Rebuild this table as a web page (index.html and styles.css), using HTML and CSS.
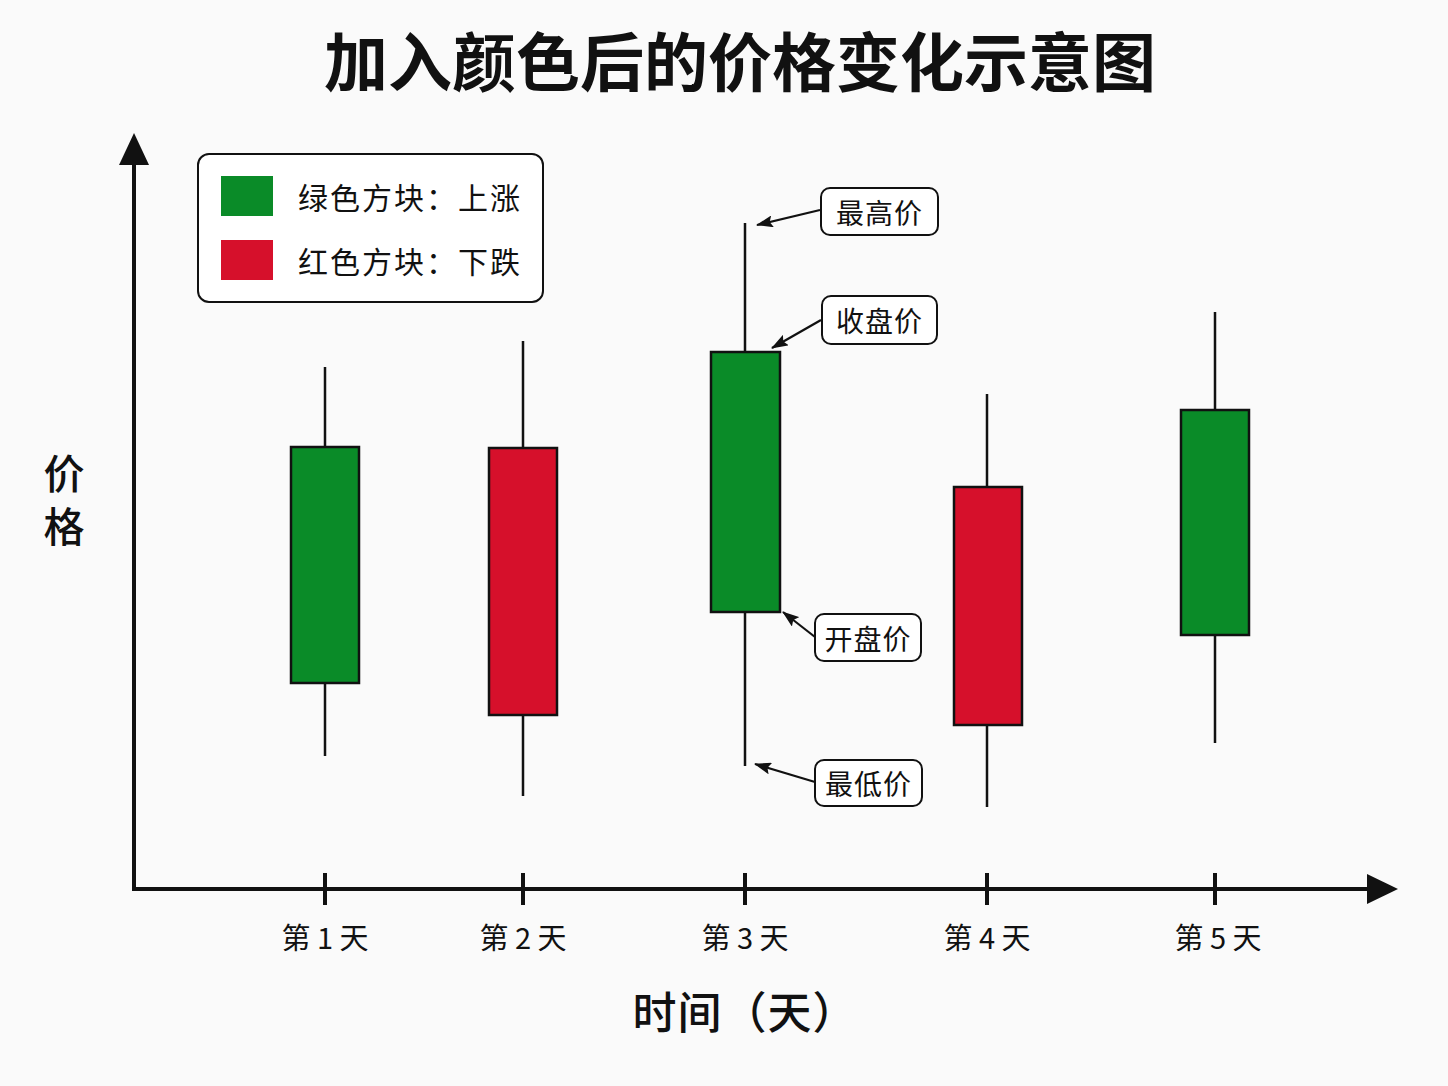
FILE: index.html
```html
<!DOCTYPE html>
<html lang="zh-CN">
<head>
<meta charset="utf-8">
<title>加入颜色后的价格变化示意图</title>
<link rel="stylesheet" href="styles.css">
</head>
<body>
<main class="page">
  <h1 class="title">加入颜色后的价格变化示意图</h1>
  <section class="chart">
    <svg class="plot" width="1448" height="860" viewBox="0 120 1448 860" xmlns="http://www.w3.org/2000/svg">
      <defs>
        <marker id="ah" viewBox="0 0 17 12" refX="16" refY="6" markerWidth="17" markerHeight="12" markerUnits="userSpaceOnUse" orient="auto">
          <path d="M0 0 L17 6 L0 12 L3 6 Z" fill="#111"/>
        </marker>
      </defs>
      <!-- axes -->
      <line x1="134" y1="160" x2="134" y2="891" stroke="#111" stroke-width="4"/>
      <polygon points="134,133 119,165 149,165" fill="#111"/>
      <line x1="132" y1="889" x2="1372" y2="889" stroke="#111" stroke-width="4"/>
      <polygon points="1398,889 1367,874 1367,904" fill="#111"/>
      <g stroke="#111" stroke-width="4">
        <line x1="325" y1="873" x2="325" y2="905"/>
        <line x1="523" y1="873" x2="523" y2="905"/>
        <line x1="745" y1="873" x2="745" y2="905"/>
        <line x1="987" y1="873" x2="987" y2="905"/>
        <line x1="1215" y1="873" x2="1215" y2="905"/>
      </g>
      <!-- wicks -->
      <g stroke="#111" stroke-width="2.5">
        <line x1="325" y1="367" x2="325" y2="756"/>
        <line x1="523" y1="341" x2="523" y2="796"/>
        <line x1="745" y1="223" x2="745" y2="766"/>
        <line x1="987" y1="394" x2="987" y2="807"/>
        <line x1="1215" y1="312" x2="1215" y2="743"/>
      </g>
      <!-- bodies -->
      <g stroke="#111" stroke-width="2.5">
        <rect x="291" y="447" width="68" height="236" fill="#0a8b28"/>
        <rect x="489" y="448" width="68" height="267" fill="#d6102b"/>
        <rect x="711" y="352" width="69" height="260" fill="#0a8b28"/>
        <rect x="954" y="487" width="68" height="238" fill="#d6102b"/>
        <rect x="1181" y="410" width="68" height="225" fill="#0a8b28"/>
      </g>
      <!-- annotation arrows -->
      <g stroke="#111" stroke-width="2.2" marker-end="url(#ah)">
        <line x1="820" y1="210" x2="757" y2="225"/>
        <line x1="821" y1="320" x2="772" y2="348"/>
        <line x1="815" y1="637" x2="783" y2="612"/>
        <line x1="815" y1="782" x2="755" y2="764"/>
      </g>
    </svg>

    <div class="legend">
      <div class="legend-row"><span class="swatch up"></span><span class="legend-text">绿色方块：上涨</span></div>
      <div class="legend-row"><span class="swatch down"></span><span class="legend-text">红色方块：下跌</span></div>
    </div>

    <div class="y-label">价格</div>

    <div class="note note-high">最高价</div>
    <div class="note note-close">收盘价</div>
    <div class="note note-open">开盘价</div>
    <div class="note note-low">最低价</div>

    <div class="tick-label t1">第 1 天</div>
    <div class="tick-label t2">第 2 天</div>
    <div class="tick-label t3">第 3 天</div>
    <div class="tick-label t4">第 4 天</div>
    <div class="tick-label t5">第 5 天</div>
  </section>
  <div class="x-title">时间（天）</div>
</main>
</body>
</html>
```
FILE: styles.css
```css
* { box-sizing: border-box; }
html, body {
  margin: 0;
  padding: 0;
  background: #fafafa;
}
body {
  font-family: "Noto Sans CJK SC", "Noto Sans", sans-serif;
  color: #111;
  width: 1448px;
  height: 1086px;
  overflow: hidden;
}
.page {
  display: flex;
  flex-direction: column;
}
.title {
  margin: 0;
  padding: 26px 0 0 32px;
  height: 120px;
  font-size: 64px;
  line-height: 64px;
  font-weight: 700;
  text-align: center;
  letter-spacing: 0;
}
.chart {
  position: relative;
  width: 1448px;
  height: 860px;
}
.plot {
  position: absolute;
  left: 0;
  top: 0;
  display: block;
}
.legend {
  position: absolute;
  left: 197px;
  top: 33px;
  width: 347px;
  height: 150px;
  border: 2px solid #111;
  border-radius: 12px;
  background: #fff;
  padding: 21px 0 0 22px;
  display: flex;
  flex-direction: column;
  gap: 24px;
}
.legend-row {
  display: flex;
  align-items: center;
  gap: 25px;
  height: 40px;
}
.swatch {
  width: 52px;
  height: 40px;
  flex: none;
}
.swatch.up { background: #0a8b28; }
.swatch.down { background: #d6102b; }
.legend-text {
  font-size: 30px;
  letter-spacing: 2px;
  line-height: 40px;
}
.y-label {
  position: absolute;
  left: 34px;
  top: 333px;
  writing-mode: vertical-rl;
  text-orientation: upright;
  font-size: 41px;
  line-height: 60px;
  letter-spacing: 12px;
  font-weight: 500;
}
.note {
  position: absolute;
  border: 2px solid #111;
  border-radius: 10px;
  background: #fff;
  display: flex;
  align-items: center;
  justify-content: center;
  font-size: 28px;
  letter-spacing: 1px;
}
.note-high { left: 820px; top: 67px; width: 119px; height: 49px; }
.note-close { left: 821px; top: 175px; width: 117px; height: 50px; }
.note-open { left: 814px; top: 493px; width: 108px; height: 49px; }
.note-low { left: 814px; top: 639px; width: 109px; height: 48px; }
.tick-label {
  position: absolute;
  top: 796px;
  width: 120px;
  margin-left: -60px;
  text-align: center;
  font-size: 29px;
  line-height: 40px;
  white-space: pre;
}
.t1 { left: 325px; }
.t2 { left: 523px; }
.t3 { left: 745px; }
.t4 { left: 987px; }
.t5 { left: 1218px; }
.x-title {
  padding-left: 42px;
  text-align: center;
  font-size: 44px;
  line-height: 50px;
  letter-spacing: 1px;
  font-weight: 500;
  margin-top: 5px;
}
```
